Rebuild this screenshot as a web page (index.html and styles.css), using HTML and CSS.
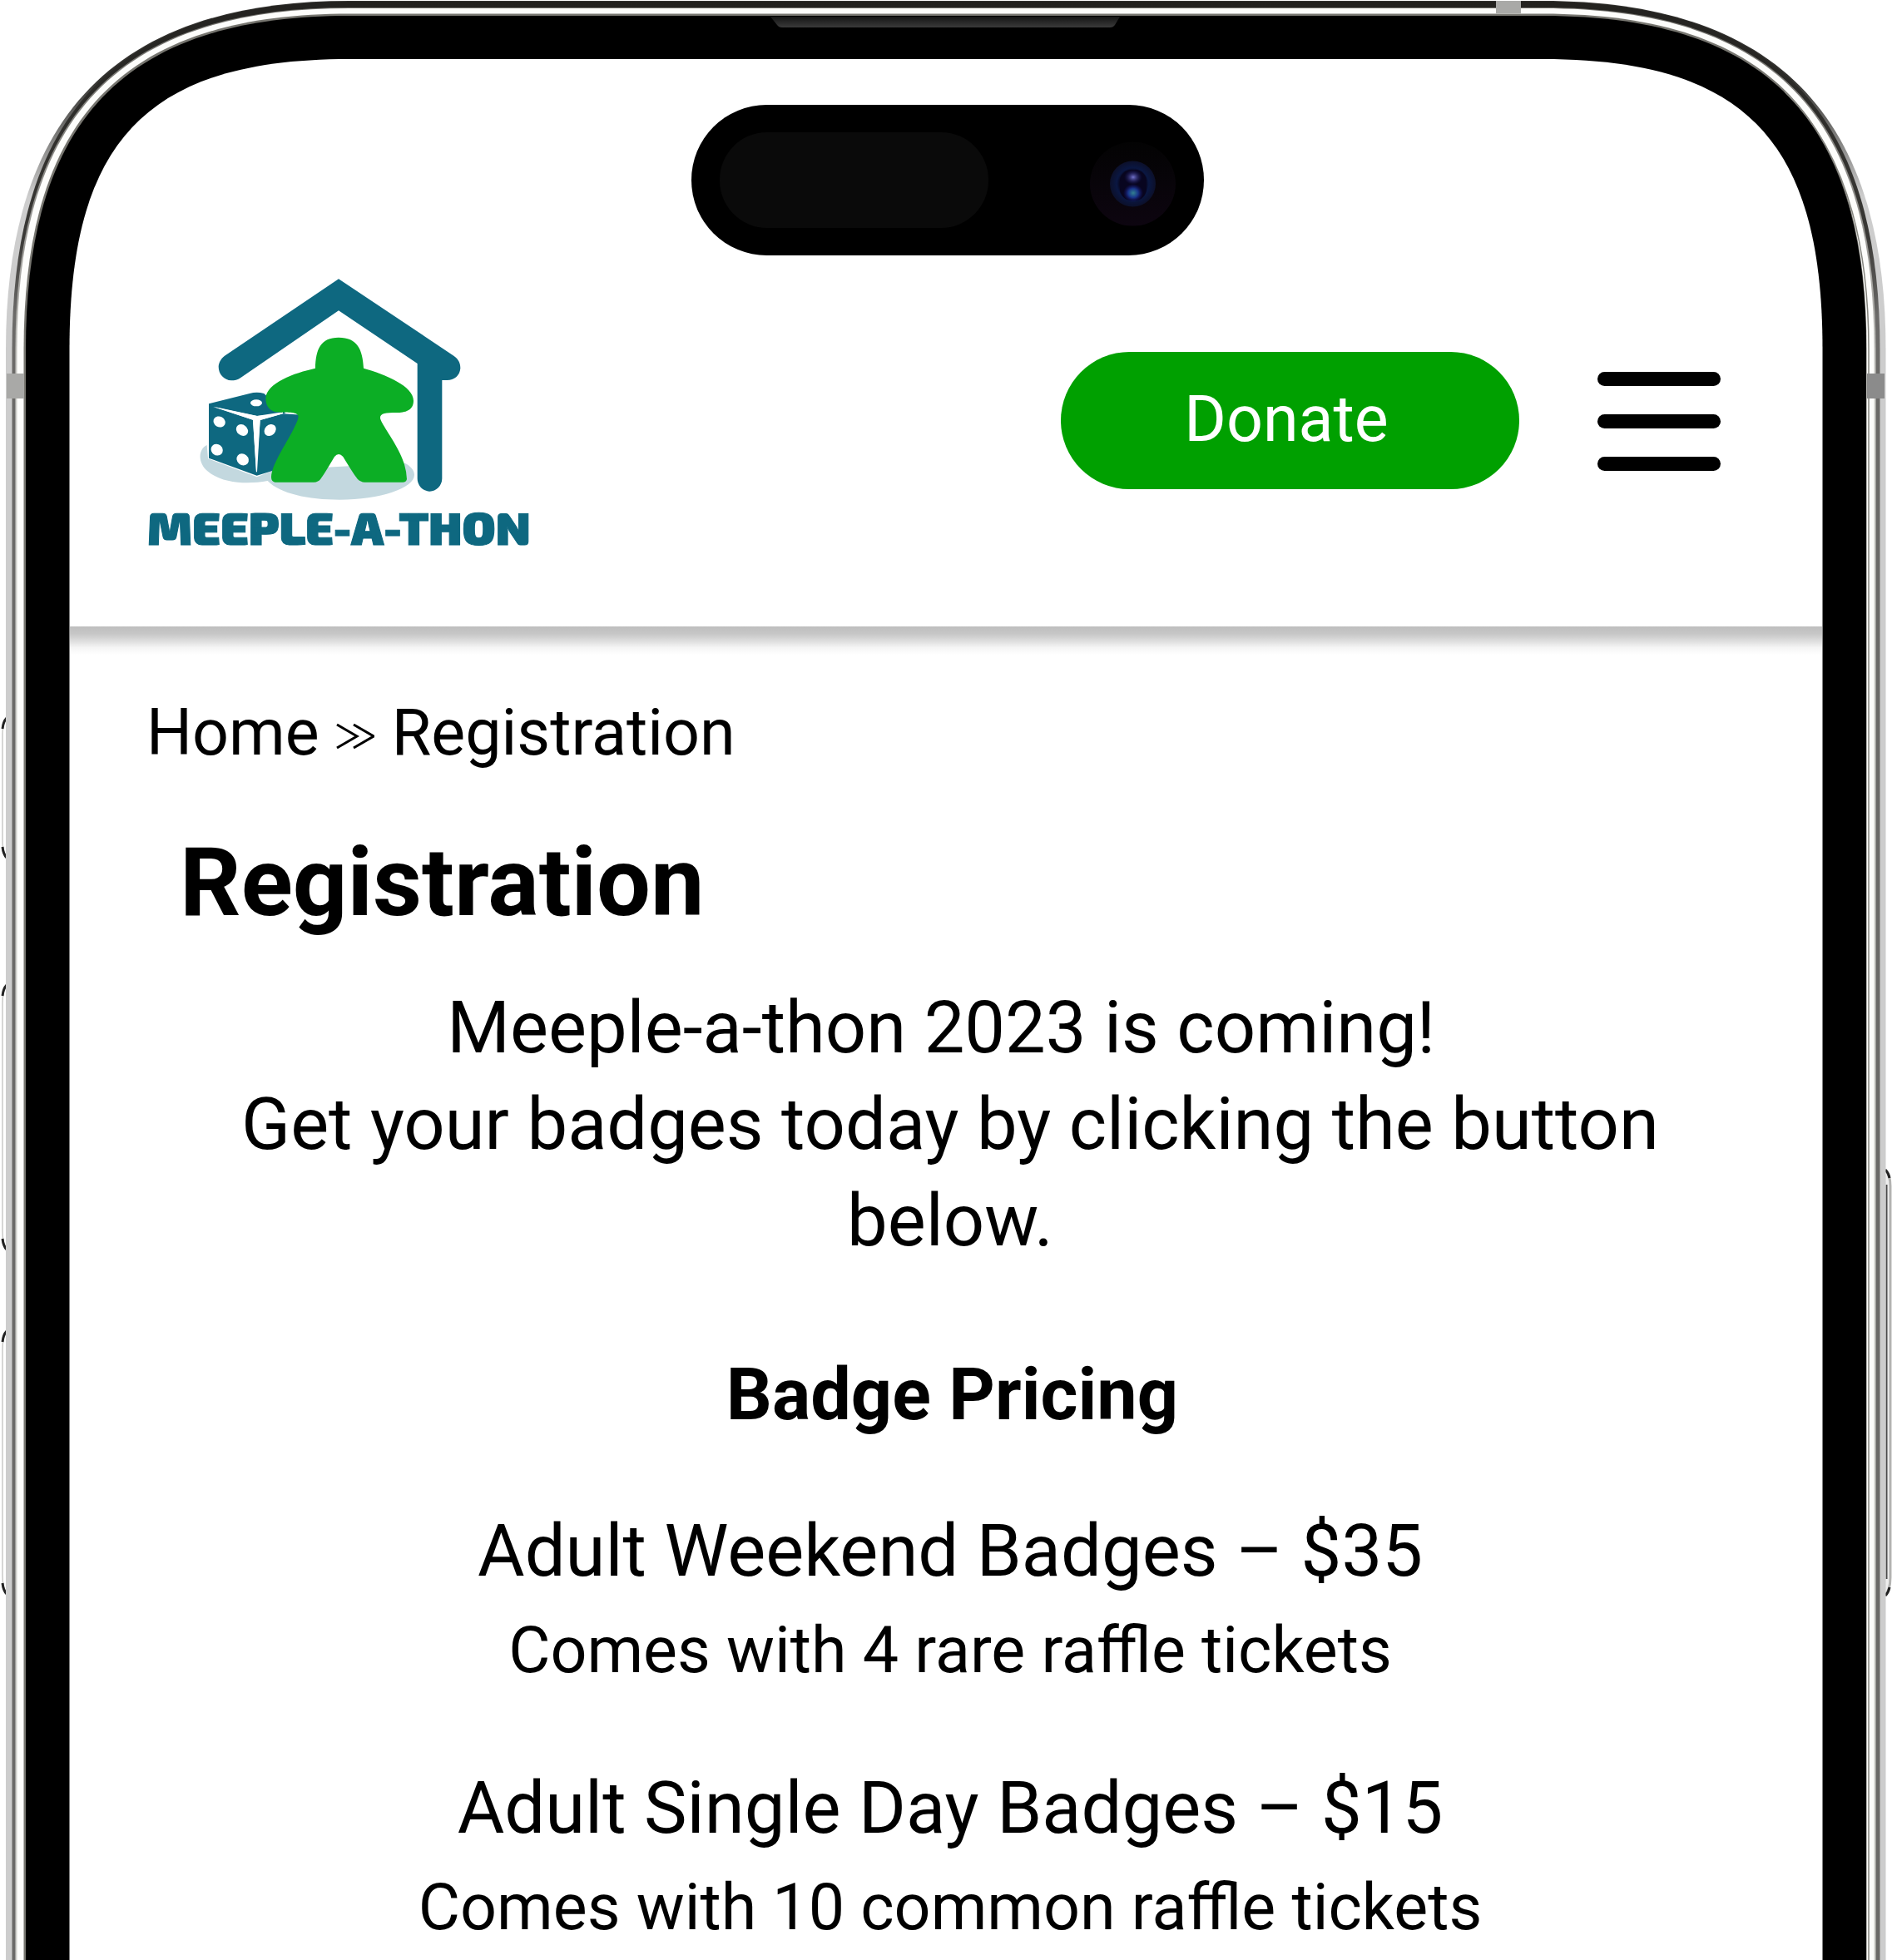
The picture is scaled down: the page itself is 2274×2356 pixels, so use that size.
FILE: index.html
```html
<!DOCTYPE html>
<html lang="en">
<head>
<meta charset="utf-8">
<title>Meeple-a-thon – Registration</title>
<link rel="stylesheet" href="styles.css">
</head>
<body>
<div class="device">
  <svg class="frame" viewBox="0 0 2274 2356" aria-hidden="true">
    <defs>
      <linearGradient id="edge" x1="0" y1="0" x2="0" y2="1">
        <stop offset="0" stop-color="#33322f"/>
        <stop offset=".04" stop-color="#33322f"/>
        <stop offset=".1" stop-color="#cdcdcd"/>
        <stop offset="1" stop-color="#cdcdcd"/>
      </linearGradient>
      <linearGradient id="line" x1="0" y1="0" x2="0" y2="1">
        <stop offset="0" stop-color="#23221f"/>
        <stop offset=".12" stop-color="#3a3936"/>
        <stop offset=".16" stop-color="#6b6a68"/>
        <stop offset="1" stop-color="#6b6a68"/>
      </linearGradient>
      <linearGradient id="soft" x1="0" y1="0" x2="0" y2="1">
        <stop offset="0" stop-color="#6f6e69"/>
        <stop offset=".12" stop-color="#9a9995"/>
        <stop offset=".2" stop-color="#cfcfcb"/>
        <stop offset="1" stop-color="#cfcfcb"/>
      </linearGradient>
      <linearGradient id="speaker" x1="0" y1="0" x2="0" y2="1">
        <stop offset="0" stop-color="#151515"/>
        <stop offset="1" stop-color="#3a3a3a"/>
      </linearGradient>
    </defs>
    <!-- side buttons -->
    <g fill="#fff" stroke="#c9c9c7" stroke-width="1.5">
      <path d="M9 863Q3 868 3 882V1010Q3 1026 9 1031"/>
      <path d="M9 1184Q3 1190 3 1206V1480Q3 1496 9 1502"/>
      <path d="M9 1600Q3 1606 3 1622V1894Q3 1910 9 1916"/>
      <path d="M2265 1406Q2272 1411 2272 1426V1896Q2272 1912 2265 1918" fill="#eee" stroke="#b3b3b1" stroke-width="3"/>
      <path d="M2267.500 1424V1898" stroke="#4b4b4b" stroke-width="2"/>
    </g>
    <g fill="none" stroke="#222" stroke-width="3">
      <path d="M8 863Q4 867 3 876M3 1018Q4 1027 8 1031M8 1184Q4 1188 3 1197M3 1489Q4 1498 8 1502M8 1600Q4 1604 3 1613M3 1903Q4 1912 8 1916"/>
      <path d="M2266 1406Q2270 1410 2271 1416M2271 1908Q2270 1914 2266 1918"/>
    </g>
    <!-- metal band, from the outer edge inwards -->
    <path fill="url(#edge)" d="M7 2356V420C7 140 140 1 420 1H1854C2134 1 2266.500 140 2266.500 420V2356Z"/>
    <path fill="url(#line)" d="M14.500 2356V420C14.500 139 139 2 420 2H1854C2135 2 2259.500 139 2259.500 420V2356Z"/>
    <path fill="url(#soft)" d="M18.500 2356V420C18.500 140 140 9 420 9H1854C2134 9 2254.500 140 2254.500 420V2356Z"/>
    <path fill="#fdfdfb" d="M20.500 2356V420C20.500 141 141 10 420 10H1854C2133 10 2252.500 141 2252.500 420V2356Z"/>
    <path fill="#777670" d="M28.500 2356V420C28.500 145 145 16.500 420 16.500H1854C2129 16.500 2243.500 145 2243.500 420V2356Z"/>
    <path fill="#000" d="M31 2356V420C31 147 147 19 420 19H1854C2127 19 2243 147 2243 420V2356Z"/>
    <path fill="none" stroke="#85857f" stroke-width="1.5" d="M2246 2356V420C2246 285 2215 178 2145 110"/>
    <path fill="#a9a9a7" d="M1798 1H1828V16H1798ZM8 449H29V479H8Z"/>
    <path fill="#8b8b8b" d="M2244 449H2265V479H2244Z"/>
    <path fill="url(#speaker)" d="M926 20H1346L1340 30Q1338 33 1334 33H940Q936 33 934 30Z"/>
    <!-- display -->
    <path fill="#fff" d="M83.500 2356V420C83.500 171 175 71 420 71H1854C2099 71 2190.500 171 2190.500 420V2356Z"/>
  </svg>

  <svg class="island" viewBox="0 0 616 181" aria-hidden="true">
    <defs>
      <radialGradient id="lens">
        <stop offset="0" stop-color="#0a0f3c"/>
        <stop offset=".55" stop-color="#07051c"/>
        <stop offset=".7" stop-color="#0a1742"/>
        <stop offset="1" stop-color="#0c102a"/>
      </radialGradient>
      <radialGradient id="glow"><stop offset="0" stop-color="#7474cc"/><stop offset="1" stop-color="#17176a" stop-opacity="0"/></radialGradient>
      <radialGradient id="glint"><stop offset="0" stop-color="#32808f"/><stop offset=".5" stop-color="#18348a"/><stop offset="1" stop-color="#15106a" stop-opacity="0"/></radialGradient>
      <linearGradient id="housing" x1="0" y1="0" x2="0" y2="1"><stop offset="0" stop-color="#030303"/><stop offset="1" stop-color="#0d0510"/></linearGradient>
    </defs>
    <rect width="616" height="181" rx="90.500" fill="#000"/>
    <rect x="34" y="33" width="323" height="115" rx="57" fill="#0a0a0a"/>
    <ellipse cx="530.500" cy="95" rx="51.500" ry="50.500" fill="url(#housing)"/>
    <circle cx="530.500" cy="95" r="27.500" fill="url(#lens)"/>
    <rect x="515" y="78" width="32" height="37" rx="14" fill="#08051f"/>
    <ellipse cx="531" cy="87" rx="11" ry="9" fill="url(#glow)"/>
    <ellipse cx="531" cy="106" rx="12" ry="11" fill="url(#glint)"/>
  </svg>

  <div class="screen">
    <header class="site-header">
      <a class="logo">
        <svg viewBox="0 0 1560 1110" role="img" aria-label="Meeple-a-thon">
          <path fill="#c3d8df" d="M296 675C264 690 262 740 300 770C350 812 440 818 515 804C560 850 660 872 775 872C920 872 1044 830 1044 782C1044 765 1030 750 1010 740L540 765L476 790L300 724Z"/>
          <g fill="#0e6880">
            <path d="M771 76L1186 353C1206 367 1210 382 1210 398C1208 424 1188 441 1162 441H1144V796C1144 822 1122 842 1100 842C1076 842 1055 822 1055 796V381L771 190L418 432C406 440 396 442 384 442C358 440 338 420 338 392C339 376 348 362 360 353Z"/>
            <path d="M303 526L450 489Q476 482 502 489L580 560L478 570L320 536L462 584L474 774L488 585L570 562L640 566L600 740L532 768L476 785L303 722Z"/>
          </g>
          <path fill="#fff" d="M318 537L476 570L570 556V562L488 585L477 772H474L462 584Z"/>
          <g fill="#fff">
            <ellipse cx="474" cy="523" rx="21" ry="12"/>
            <ellipse cx="341" cy="591" rx="22" ry="19" transform="rotate(30 341 591)"/>
            <ellipse cx="423" cy="621" rx="23" ry="19" transform="rotate(40 423 621)"/>
            <ellipse cx="332" cy="692" rx="22" ry="20" transform="rotate(40 332 692)"/>
            <ellipse cx="425" cy="727" rx="23" ry="20" transform="rotate(40 425 727)"/>
            <ellipse cx="524" cy="621" rx="23" ry="19" transform="rotate(-45 524 621)"/>
          </g>
          <path fill="#0cae25" d="M687 398C688 330 706 287 771 287C838 287 858 330 861 398C940 420 1041 462 1041 515C1041 550 1010 558 980 558C940 558 920 560 921 578C924 600 990 680 1008 745Q1016 772 1017 798Q1015 809 1002 809H865Q850 808 839 797Q828 785 787 717Q771 699 756 717Q716 785 706 797Q698 808 682 809H542Q528 808 528 790C530 740 590 660 614 605Q625 585 626 572C622 552 580 560 548 556C522 552 508 534 508 506C512 450 610 415 687 398Z"/>
          <text x="81" y="1036" class="wordmark" textLength="1382" lengthAdjust="spacingAndGlyphs">MEEPLE-A-THON</text>
        </svg>
      </a>
      <a class="donate">Donate</a>
      <div class="menu"><span></span><span></span><span></span></div>
    </header>
    <main class="content">
      <nav class="crumbs"><span>Home</span>
        <svg class="sep" viewBox="0 0 46 32" aria-hidden="true"><path d="M1 2L25 16L1 30M21 2L45 16L21 30"/></svg>
        <span>Registration</span></nav>
      <h1>Registration</h1>
      <p class="lead">Meeple-a-thon 2023 is coming!&nbsp;<br>Get your badges today by clicking the button<br>below.</p>
      <h2>Badge Pricing</h2>
      <section class="tier"><p class="price">Adult Weekend Badges – $35</p><p class="note">Comes with 4 rare raffle tickets</p></section>
      <section class="tier"><p class="price">Adult Single Day Badges – $15</p><p class="note">Comes with 10 common raffle tickets</p></section>
    </main>
  </div>
</div>
</body>
</html>
```
FILE: styles.css
```css
* { box-sizing: border-box; }
body { margin: 0; background: #fff; color: #000; font-family: Roboto, "Liberation Sans", sans-serif; }
.device { position: relative; width: 2274px; height: 2356px; overflow: hidden; }
.frame { position: absolute; inset: 0; width: 2274px; height: 2356px; }
.island { position: absolute; left: 831px; top: 126px; width: 616px; height: 181px; }
.screen { position: relative; margin: 0 83px 0 84px; padding-top: 310px; }
.site-header { display: flex; align-items: flex-start; height: 443px; padding-left: 66px; }
.site-header::after { content: ""; position: absolute; left: 0; right: 1px; top: 753px; height: 34px; background: linear-gradient(#bebebe, #c6c6c6 25%, #dcdcdc 50%, #f5f5f5 75%, #fff); }
.logo svg { display: block; width: 520px; height: 370px; }
.wordmark { font-family: "Exo 2", Lato, sans-serif; font-weight: 900; font-size: 160px; fill: #0e6880; stroke: #0e6880; stroke-width: 3px; }
.donate { display: flex; align-items: center; justify-content: center; width: 551px; height: 165px; margin: 113px 0 0 605px; border-radius: 83px; background: #00a000; color: #fff; font-size: 77.200px; padding-bottom: 4px; padding-right: 9px; }
.menu { display: flex; flex-direction: column; gap: 34px; margin: 137px 0 0 94px; }
.menu span { width: 148px; height: 17px; border-radius: 9px; background: #000; }
.content { padding-top: 82px; }
.crumbs { display: flex; align-items: center; padding-left: 92px; font-size: 77.200px; line-height: 92px; }
.sep { width: 46px; height: 32px; margin: 8px 21px 0 20px; fill: none; stroke: #000; stroke-width: 3px; }
h1 { margin: 66px 0 0 132px; font-size: 115px; line-height: 136px; font-weight: 700; }
h2 { margin: 93px 0 0; font-size: 86.400px; line-height: 116px; font-weight: 700; text-align: center; padding-left: 14px; }
p { margin: 0; text-align: center; }
.lead { margin-top: 48.500px; font-size: 86.700px; line-height: 116px; padding-left: 9px; }
.tier { margin-top: 71px; padding-left: 9px; }
.tier + .tier { margin-top: 70px; }
.price { font-size: 86.800px; line-height: 116px; }
.note { font-size: 77.200px; line-height: 123px; }
```
